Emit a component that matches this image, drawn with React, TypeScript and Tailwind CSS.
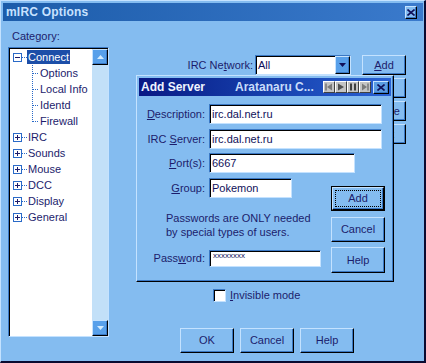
import React from "react";

const raised =
  "border border-t-[#c4e2ff] border-l-[#c4e2ff] border-r-black border-b-black shadow-[inset_-1px_-1px_0_#3a78c4]";
const sunken =
  "border border-t-[#3a78c4] border-l-[#3a78c4] border-r-[#c4e2ff] border-b-[#c4e2ff] shadow-[inset_1px_1px_0_#000]";

function Btn({ children, className = "" }: { children?: React.ReactNode; className?: string }) {
  return (
    <div className={"flex items-center justify-center bg-[#84bcf0] " + raised + " " + className}>
      {children}
    </div>
  );
}

function Field({ value, className = "" }: { value: React.ReactNode; className?: string }) {
  return (
    <div className={"flex items-center bg-white pl-[2px] text-[#10105a] " + sunken + " " + className}>
      {value}
    </div>
  );
}

function U({ children }: { children: React.ReactNode }) {
  return <span className="underline underline-offset-[1px]">{children}</span>;
}

function RootRow({ label, open = false, selected = false }: { label: string; open?: boolean; selected?: boolean }) {
  return (
    <div className="flex h-[16px] items-center">
      <div className="w-[3px]" />
      <svg width="9" height="9" viewBox="0 0 9 9" className="shrink-0">
        <rect x="0.5" y="0.5" width="8" height="8" fill="white" stroke="#2a6ac8" />
        <line x1="2" y1="4.5" x2="7" y2="4.5" stroke="#1c1c6c" />
        {!open && <line x1="4.5" y1="2" x2="4.5" y2="7" stroke="#1c1c6c" />}
      </svg>
      <svg width="5" height="16" className="shrink-0">
        <line x1="0" y1="8.5" x2="5" y2="8.5" stroke="#2a6ac8" strokeDasharray="1 1" />
      </svg>
      <span
        className={
          selected
            ? "px-[1px] h-[14px] leading-[14px] bg-[#1c4ea8] text-white"
            : "ml-[1px]"
        }
      >
        {label}
      </span>
    </div>
  );
}

function ChildRow({ label, last = false }: { label: string; last?: boolean }) {
  return (
    <div className="flex h-[16px] items-center">
      <div className="w-[22px]" />
      <svg width="7" height="16" className="shrink-0">
        <line x1="0.5" y1="0" x2="0.5" y2={last ? 9 : 16} stroke="#2a6ac8" strokeDasharray="1 1" />
        <line x1="1" y1="8.5" x2="7" y2="8.5" stroke="#2a6ac8" strokeDasharray="1 1" />
      </svg>
      <span className="ml-[1px]">{label}</span>
    </div>
  );
}

function ScrollBtn({ up }: { up?: boolean }) {
  return (
    <div className={"w-[16px] h-[16px] flex items-center justify-center bg-[#58a0ea] " + raised}>
      <svg width="7" height="4" viewBox="0 0 7 4">
        {up ? <polygon points="3.5,0 7,4 0,4" fill="#d4ecff" /> : <polygon points="0,0 7,0 3.5,4" fill="#d4ecff" />}
      </svg>
    </div>
  );
}

function MediaBtn({ kind }: { kind: string }) {
  return (
    <div className="w-[12px] h-[12px] flex items-center justify-center bg-[#c4c4c4] border border-t-white border-l-white border-r-[#404040] border-b-[#404040]">
      <svg width="8" height="8" viewBox="0 0 8 8">
        {kind === "prev" && (
          <>
            <rect x="0.5" y="0.5" width="1" height="7" fill="#505050" />
            <polygon points="7,0.5 7,7.5 2,4" fill="#7a7a7a" />
          </>
        )}
        {kind === "play" && <polygon points="1,0.5 1,7.5 7,4" fill="#505050" />}
        {kind === "pause" && (
          <>
            <rect x="1" y="0.5" width="2" height="7" fill="#404040" />
            <rect x="5" y="0.5" width="2" height="7" fill="#404040" />
          </>
        )}
        {kind === "next" && (
          <>
            <polygon points="1,0.5 1,7.5 6,4" fill="#7a7a7a" />
            <rect x="6.5" y="0.5" width="1" height="7" fill="#505050" />
          </>
        )}
      </svg>
    </div>
  );
}

export default function App() {
  return (
    <div className="w-[426px] h-[363px] relative flex flex-col overflow-hidden bg-[#84bcf0] border-l border-t border-l-[#c4e2ff] border-t-[#c4e2ff] border-r-2 border-b-2 border-r-[#0a0a30] border-b-[#0a0a30] pt-[2px] pl-[2px] pr-[1px] font-['Liberation_Sans',Arial,sans-serif] text-[11px] leading-[13px] text-[#1c1c6c]">
      {/* Title bar */}
      <div className="h-[18px] shrink-0 flex items-center justify-between bg-linear-to-r from-[#1c5caa] to-[#3a7acc] pl-[3px] pr-[6px]">
        <span className="font-bold text-[12px] text-[#c8e2ff] tracking-[0.2px]">mIRC Options</span>
        <div className={"w-[12px] h-[13px] flex items-center justify-center bg-[#84bcf0] " + raised}>
          <svg width="8" height="7" viewBox="0 0 8 7">
            <path d="M0.5 0.5 L7.5 6.5 M7.5 0.5 L0.5 6.5" stroke="#10105a" strokeWidth="1.6" />
          </svg>
        </div>
      </div>

      {/* Body */}
      <div className="flex flex-1">
        {/* Left column */}
        <div className="w-[107px] shrink-0 flex flex-col pl-[5px]">
          <div className="mt-[9px] pl-[4px]">Category:</div>
          <div className="mt-[4px] w-[101px] h-[290px] flex bg-white border border-t-[#3a78c4] border-l-[#3a78c4] border-r-[#c4e2ff] border-b-[#c4e2ff] shadow-[inset_1px_1px_0_#000]">
            <div className="flex-1 flex flex-col pt-[1px] pl-[1px]">
              <RootRow label="Connect" open selected />
              <ChildRow label="Options" />
              <ChildRow label="Local Info" />
              <ChildRow label="Identd" />
              <ChildRow label="Firewall" last />
              <RootRow label="IRC" />
              <RootRow label="Sounds" />
              <RootRow label="Mouse" />
              <RootRow label="DCC" />
              <RootRow label="Display" />
              <RootRow label="General" />
            </div>
            <div className="w-[16px] flex flex-col justify-between bg-[#c2e0f8] mt-[1px]">
              <ScrollBtn up />
              <ScrollBtn />
            </div>
          </div>
        </div>

        {/* Right column */}
        <div className="flex-1 flex flex-col">
          <div className="mt-[34px] flex items-start">
            <div className="flex items-center h-[20px]">
              <div className="w-[143px] text-right">
                IRC Ne<U>t</U>work:
              </div>
              <div className={"ml-[2px] w-[96px] h-[20px] flex bg-white " + sunken}>
                <span className="flex-1 pl-[2px] leading-[18px] text-[#10105a]">All</span>
                <div className={"w-[15px] h-full flex items-center justify-center bg-[#58a0ea] " + raised}>
                  <svg width="7" height="4" viewBox="0 0 7 4">
                    <polygon points="0,0 7,0 3.5,4" fill="#10105a" />
                  </svg>
                </div>
              </div>
            </div>
            <div className="ml-[11px] flex flex-col gap-[3px]">
              <Btn className="w-[44px] h-[20px]">
                <U>A</U>dd
              </Btn>
              <Btn className="w-[44px] h-[20px]">Edit</Btn>
              <Btn className="w-[44px] h-[20px]">Delete</Btn>
              <Btn className="w-[44px] h-[20px]">Sort</Btn>
            </div>
          </div>

          <div className="mt-[145px] ml-[103px] flex items-center h-[13px]">
            <div className={"w-[13px] h-[13px] bg-white " + sunken} />
            <span className="ml-[4px]">
              <U>I</U>nvisible mode
            </span>
          </div>

          <div className="mt-[26px] ml-[70px] flex gap-[6px]">
            <Btn className="w-[54px] h-[25px]">OK</Btn>
            <Btn className="w-[54px] h-[25px]">Cancel</Btn>
            <Btn className="w-[54px] h-[25px]">Help</Btn>
          </div>
        </div>
      </div>

      {/* Add Server dialog */}
      <div className="absolute left-[135px] top-[74px] w-[258px] h-[207px] flex flex-col bg-[#84bcf0] p-[2px] border border-t-[#c4e2ff] border-l-[#c4e2ff] border-r-black border-b-black shadow-[inset_-1px_-1px_0_#3a78c4]">
        <div className="h-[18px] shrink-0 flex items-center bg-linear-to-r from-[#0a1884] to-[#2a62d4] pl-[2px] pr-[2px]">
          <span className="font-bold text-[12px] text-[#eef4ff]">Add Server</span>
          <span className="ml-[30px] font-bold text-[12px] text-[#c8dcfa]">Aratanaru C...</span>
          <div className="ml-auto flex">
            <MediaBtn kind="prev" />
            <MediaBtn kind="play" />
            <MediaBtn kind="pause" />
            <MediaBtn kind="next" />
          </div>
          <div className={"ml-[2px] w-[16px] h-[13px] flex items-center justify-center bg-[#5a9ce2] " + raised}>
            <svg width="8" height="7" viewBox="0 0 8 7">
              <path d="M0.5 0.5 L7.5 6.5 M7.5 0.5 L0.5 6.5" stroke="#10105a" strokeWidth="1.6" />
            </svg>
          </div>
        </div>

        <div className="mt-[8px] flex items-center">
          <div className="w-[66px] text-right">
            <U>D</U>escription:
          </div>
          <Field value="irc.dal.net.ru" className="ml-[4px] w-[173px] h-[20px]" />
        </div>
        <div className="mt-[5px] flex items-center">
          <div className="w-[66px] text-right">
            IRC <U>S</U>erver:
          </div>
          <Field value="irc.dal.net.ru" className="ml-[4px] w-[173px] h-[20px]" />
        </div>
        <div className="mt-[4px] flex items-center">
          <div className="w-[66px] text-right">
            <U>P</U>ort(s):
          </div>
          <Field value="6667" className="ml-[4px] w-[146px] h-[20px]" />
        </div>

        <div className="mt-[5px] flex">
          <div className="w-[192px] flex flex-col">
            <div className="flex items-center">
              <div className="w-[66px] text-right">
                <U>G</U>roup:
              </div>
              <Field value="Pokemon" className="ml-[4px] w-[83px] h-[20px]" />
            </div>
            <div className="mt-[13px] ml-[27px] leading-[14px]">
              <div>Passwords are ONLY needed</div>
              <div>by special types of users.</div>
            </div>
            <div className="mt-[11px] flex items-center">
              <div className="w-[66px] text-right">
                Pass<U>w</U>ord:
              </div>
              <div className={"ml-[4px] w-[112px] h-[17px] bg-white pl-[3px] pt-[1px] text-[8px] leading-[8px] text-[#10105a] " + sunken}>
                xxxxxxxx
              </div>
            </div>
          </div>
          <div className="flex flex-col">
            <div className="mt-[8px] w-[54px] h-[25px] border border-black flex">
              <div className={"flex-1 flex items-center justify-center bg-[#84bcf0] p-[2px] " + raised}>
                <div className="w-full h-full flex items-center justify-center border border-dotted border-black">
                  Add
                </div>
              </div>
            </div>
            <Btn className="mt-[6px] w-[54px] h-[25px]">Cancel</Btn>
            <Btn className="mt-[5px] w-[54px] h-[26px]">Help</Btn>
          </div>
        </div>
      </div>
    </div>
  );
}
